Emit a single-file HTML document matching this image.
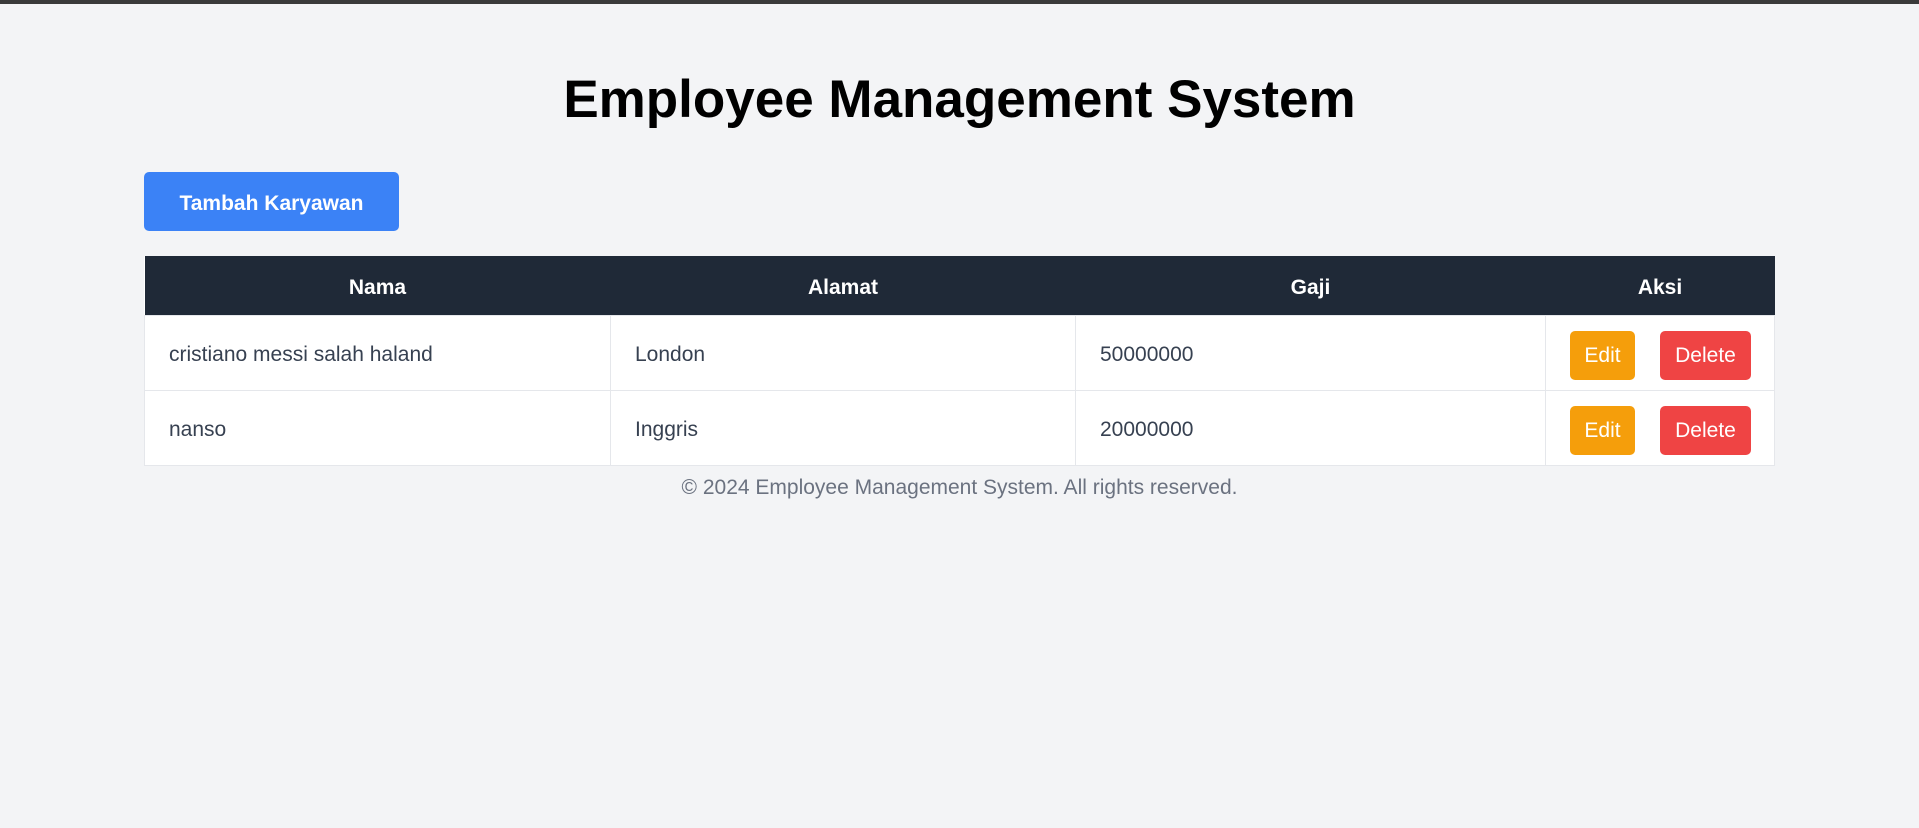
<!DOCTYPE html>
<html><head><meta charset="utf-8"><style>
html,body{margin:0;padding:0;}
body{width:1919px;height:828px;background:#f3f4f6;font-family:"Liberation Sans",sans-serif;position:relative;overflow:hidden;border-top:4px solid #3a3a3a;box-sizing:border-box;}
h1{position:absolute;left:0;width:1919px;top:61px;margin:0;text-align:center;font-size:53px;font-weight:bold;color:#000;line-height:70px;}
.add{position:absolute;left:144px;top:168px;width:255px;height:59px;background:#3b82f6;border-radius:5px;color:#fff;font-weight:bold;font-size:21px;line-height:55px;padding-top:4px;box-sizing:border-box;text-align:center;}
table{position:absolute;left:144px;top:252px;width:1631px;border-collapse:collapse;background:#fff;}
th{background:#1f2937;color:#fff;font-size:21px;font-weight:bold;height:55px;padding:4px 0 0;text-align:center;}
td{border:1px solid #e5e7eb;height:70px;padding:4px 0 0 24px;font-size:21px;color:#374151;}
.b{display:inline-block;height:49px;line-height:49px;border-radius:5px;color:#fff;font-size:21px;text-align:center;vertical-align:middle;position:relative;top:0;}
.e{background:#f59e0b;width:65px;}
.d{background:#ef4444;width:91px;margin-left:25px;}
.f{position:absolute;left:0;width:1919px;top:472px;text-align:center;font-size:21px;color:#6b7280;}
</style></head><body>
<h1>Employee Management System</h1>
<div class="add">Tambah Karyawan</div>
<table>
<tr><th style="width:466px">Nama</th><th style="width:465px">Alamat</th><th style="width:470px">Gaji</th><th>Aksi</th></tr>
<tr><td>cristiano messi salah haland</td><td>London</td><td>50000000</td><td><span class="b e">Edit</span><span class="b d">Delete</span></td></tr>
<tr><td>nanso</td><td>Inggris</td><td>20000000</td><td><span class="b e">Edit</span><span class="b d">Delete</span></td></tr>
</table>
<div class="f">© 2024 Employee Management System. All rights reserved.</div>
</body></html>
